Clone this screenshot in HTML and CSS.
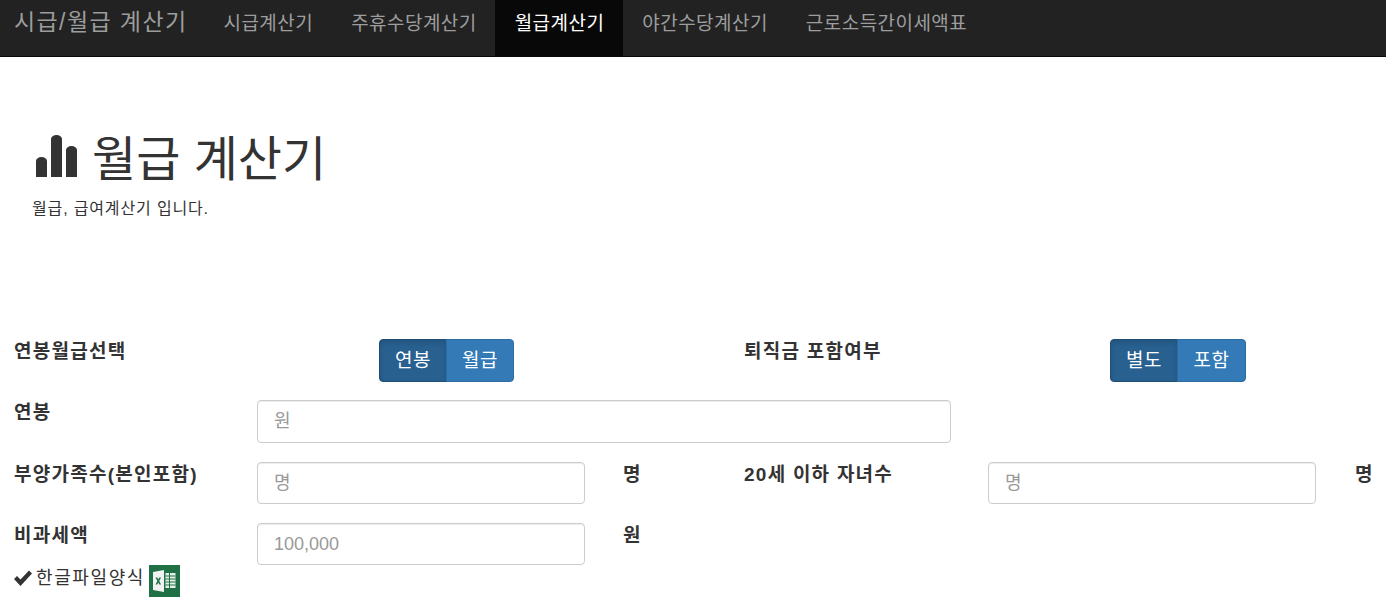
FILE: index.html
```html
<!DOCTYPE html>
<html lang="ko">
<head>
<meta charset="utf-8">
<title>월급 계산기</title>
<link rel="stylesheet" href="styles.css">
</head>
<body>
<nav class="navbar">
  <a class="brand" href="#">시급/월급 계산기</a>
  <ul class="nav">
    <li><a href="#">시급계산기</a></li>
    <li><a href="#">주휴수당계산기</a></li>
    <li class="active"><a href="#">월급계산기</a></li>
    <li><a href="#">야간수당계산기</a></li>
    <li><a href="#">근로소득간이세액표</a></li>
  </ul>
</nav>
<main class="page">
  <header class="hero">
    <h1><svg class="chart" viewBox="0 0 41 42" width="41" height="42" aria-hidden="true"><path d="M0 42V26a5.500 4 0 0 1 11 0V42zM15 42V4a5.500 4 0 0 1 11 0V42zM30 42V15a5.500 4 0 0 1 11 0V42z" fill="#333"/></svg>월급 계산기</h1>
    <p class="lead">월급, 급여계산기 입니다.</p>
  </header>
  <form class="form">
    <div class="row row-toggle">
      <label class="lbl">연봉월급선택</label>
      <div class="cell"><div class="group"><button type="button" class="btn on">연봉</button><button type="button" class="btn">월급</button></div></div>
      <label class="lbl lbl2">퇴직금 포함여부</label>
      <div class="cell"><div class="group"><button type="button" class="btn on">별도</button><button type="button" class="btn btn-wide">포함</button></div></div>
    </div>
    <div class="row row-wide">
      <label class="lbl">연봉</label>
      <input class="inp wide" placeholder="원">
    </div>
    <div class="row row-std">
      <label class="lbl">부양가족수(본인포함)</label>
      <input class="inp" placeholder="명">
      <span class="lbl unit">명</span>
      <label class="lbl lbl2">20세 이하 자녀수</label>
      <input class="inp" placeholder="명">
      <span class="lbl unit">명</span>
    </div>
    <div class="row row-last">
      <label class="lbl">비과세액</label>
      <input class="inp" placeholder="100,000">
      <span class="lbl unit">원</span>
    </div>
  </form>
  <div class="file">
    <svg class="check" viewBox="0 0 18 16" width="18" height="16" aria-hidden="true"><path d="M0 9L3 6 6.500 9.500 15 0.500 18 3.500 6.500 16z" fill="#333"/></svg>
    <span class="file-text">한글파일양식</span>
    <svg class="xls" viewBox="0 0 31 32" width="31" height="32" aria-hidden="true">
      <rect width="31" height="32" fill="#1f7145"/>
      <path d="M4 7L15 5V27L4 25z" fill="#f2f2f2"/>
      <path d="M6.500 12.500h1.800l1 2 1-2h1.800l-1.900 3.500 1.900 3.500h-1.800l-1-2-1 2H6.500l1.900-3.500z" fill="#1f7145"/>
      <path d="M16.500 8h10v15h-10z" fill="#e6f0ea"/>
      <path d="M16.500 11h10M16.500 14h10M16.500 17h10M16.500 20h10M20.500 8v15" stroke="#1f7145" stroke-width="1" fill="none"/>
    </svg>
  </div>
</main>
</body>
</html>
```
FILE: styles.css
```css
* { box-sizing: border-box; }
html, body { margin: 0; height: 604px; overflow: hidden; }
body {
  font-family: "Liberation Sans", "Noto Sans CJK KR", sans-serif;
  font-size: 14px;
  color: #333;
  background: #fff;
}
a { text-decoration: none; }
.navbar {
  display: flex;
  height: 57px;
  background: #222;
  border-bottom: 1px solid #080808;
  padding-left: 14px;
}
.brand {
  width: 190px;
  font-size: 23px;
  line-height: 45px;
  letter-spacing: 1.4px;
  color: #9d9d9d;
  white-space: nowrap;
}
.nav { display: flex; list-style: none; margin: 0; padding: 0; }
.nav a {
  display: block;
  padding: 0 18.5px 0 19.5px;
  height: 56px;
  font-size: 19px;
  line-height: 47px;
  letter-spacing: .45px;
  color: #9d9d9d;
  white-space: nowrap;
}
.nav .active a { background: #080808; color: #fff; }
.page { padding-left: 14px; }
.hero { padding: 68px 0 0 22px; height: 282px; }
h1 {
  margin: 0;
  display: flex;
  align-items: center;
  gap: 15px;
  font-size: 48px;
  font-weight: 400;
  line-height: 70px;
  white-space: nowrap;
}
.chart { flex: none; margin-bottom: 9px; }
.lead { margin: 3px 0 0 -4px; font-size: 16px; line-height: 22px; letter-spacing: .85px; }
.row {
  display: grid;
  grid-template-columns: 243px 366px 121px 244px 367px 1fr;
  align-items: start;
}
.row-toggle { grid-template-columns: 243px 487px 244px 1fr; height: 43px; margin-bottom: 18px; }
.row-wide { height: 43px; margin-bottom: 19px; }
.row-std { height: 42px; margin-bottom: 19px; }
.row-last { height: 42px; }
.lbl {
  font-size: 19px;
  font-weight: 700;
  line-height: 26px;
  letter-spacing: 1.25px;
  white-space: nowrap;
}
.cell { padding-left: 122px; }
.group { display: flex; }
.btn {
  height: 43px;
  width: 68px;
  padding: 0;
  font: 19px/24px "Liberation Sans", "Noto Sans CJK KR", sans-serif;
  letter-spacing: .6px;
  color: #fff;
  background: #337ab7;
  border: 1px solid #2e6da4;
  border-radius: 0 4px 4px 0;
  margin-left: -1px;
}
.btn-wide { width: 69px; }
.btn.on {
  margin-left: 0;
  background: #286090;
  border-color: #204d74;
  border-radius: 4px 0 0 4px;
  box-shadow: inset 0 3px 5px rgba(0, 0, 0, .125);
}
.inp {
  display: block;
  width: 328px;
  height: 100%;
  padding: 0 16px;
  font: 18px/24px "Liberation Sans", "Noto Sans CJK KR", sans-serif;
  color: #555;
  background: #fff;
  border: 1px solid #ccc;
  border-radius: 4px;
  box-shadow: inset 0 1px 1px rgba(0, 0, 0, .075);
}
.inp::placeholder { color: #999; }
.wide { width: 694px; grid-column: span 2; }
.file { display: flex; align-items: flex-start; height: 32px; }
.check { margin-top: 5px; flex: none; }
.file-text { margin: 0 4px 0 4px; font-size: 18px; line-height: 26px; letter-spacing: 1.6px; }
.xls { flex: none; }
```
